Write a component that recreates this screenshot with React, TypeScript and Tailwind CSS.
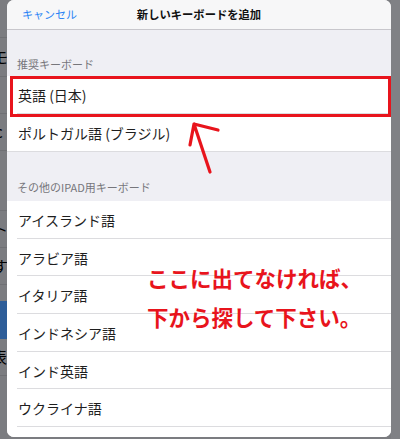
import React from "react";

const JP = { fontFamily: '"Noto Sans CJK JP", "Noto Sans", sans-serif' };

function Row({ label, sep = true }: { label: string; sep?: boolean }) {
  return (
    <div className="relative h-[37.7px] flex items-center bg-white shrink-0">
      <span className="pl-[11px] text-[14px] text-[#1e1e1e] leading-none">{label}</span>
      {sep && <div className="absolute left-[10px] right-0 bottom-0 h-px bg-[#dcdcdf]" />}
    </div>
  );
}

export default function App() {
  return (
    <div className="relative w-[400px] h-[439px] overflow-hidden bg-[#7b7c80]" style={JP}>
      {/* background page behind the sheet */}
      <div className="absolute inset-0 flex flex-col">
        <div className="h-[38px] border-b border-[#6f7074]" />
        <div className="h-[39px] border-b border-[#6f7074] flex items-center text-[15px] text-black"><span className="ml-[-7px]">モ</span></div>
        <div className="h-[37px] border-b border-[#6f7074] flex items-center text-[15px] text-black"><span className="ml-[-4px]">i</span></div>
        <div className="h-[37px] border-b border-[#6f7074] flex items-center text-[15px] text-black"><span className="ml-[-5px]">c</span></div>
        <div className="h-[60px] border-b border-[#6f7074]" />
        <div className="h-[37px] border-b border-[#6f7074] flex items-center text-[15px] text-black"><span className="ml-[-7px]">ト</span></div>
        <div className="h-[37px] border-b border-[#6f7074] flex items-center text-[15px] text-black"><span className="ml-[-7px]">す</span></div>
        <div className="h-[16px]" />
        <div className="h-[38px] bg-[#2e5d98]" />
        <div className="h-[37px] border-b border-[#6f7074] flex items-center text-[15px] text-black"><span className="ml-[-8px]">表</span></div>
      </div>
      <div className="absolute right-0 top-0 w-[9px] h-full bg-[#808185]" />

      {/* sheet */}
      <div className="absolute left-[7px] top-0 w-[384px] h-[437px] rounded-[7px] overflow-hidden bg-white flex flex-col">
        <div className="h-[30px] shrink-0 bg-[#f7f7f8] border-b border-[#c8c7cc] grid grid-cols-[1fr_auto_1fr] items-center">
          <span className="pl-[15px] text-[11px] text-[#2a84f5] leading-none">キャンセル</span>
          <span className="text-[11.3px] font-bold text-[#111] leading-none">新しいキーボードを追加</span>
          <span />
        </div>
        <div className="h-[46px] shrink-0 bg-[#efeff4] flex items-end pb-[6px]">
          <span className="pl-[10px] text-[11px] text-[#76767b] leading-none">推奨キーボード</span>
        </div>
        <div className="relative h-[38px] flex items-center bg-white shrink-0">
          <span className="pl-[11px] text-[14px] text-[#1e1e1e] leading-none">英語 (日本)</span>
          <div className="absolute left-[10px] right-0 bottom-0 h-px bg-[#dcdcdf]" />
        </div>
        <div className="h-[38px] flex items-center bg-white shrink-0 border-b border-[#dcdcdf]">
          <span className="pl-[11px] text-[14px] text-[#1e1e1e] leading-none">ポルトガル語 (ブラジル)</span>
        </div>
        <div className="h-[49px] shrink-0 bg-[#efeff4] flex items-end pb-[8px]">
          <span className="pl-[10px] text-[11px] text-[#76767b] leading-none">その他のIPAD用キーボード</span>
        </div>
        <Row label="アイスランド語" />
        <Row label="アラビア語" />
        <Row label="イタリア語" />
        <Row label="インドネシア語" />
        <Row label="インド英語" />
        <Row label="ウクライナ語" />
        <div className="flex-1 bg-white" />

        {/* red highlight box */}
        <div className="absolute left-[3px] top-[76px] w-[381px] h-[41px] border-[3px] border-[#e8141c]" />
      </div>

      {/* annotation text */}
      <div className="absolute left-[147px] top-[264px] flex flex-col gap-[11px] text-[21.5px] font-bold text-[#e8141c] leading-[28px]">
        <span>ここに出てなければ、</span>
        <span>下から探して下さい。</span>
      </div>

      {/* arrow */}
      <svg className="absolute left-0 top-0" width="400" height="439" viewBox="0 0 400 439">
        <path d="M210 172 L194 124 M190 145 L194 124 L218 130" fill="none" stroke="#e8141c" strokeWidth="3.2" strokeLinecap="round" strokeLinejoin="round" />
      </svg>
    </div>
  );
}
